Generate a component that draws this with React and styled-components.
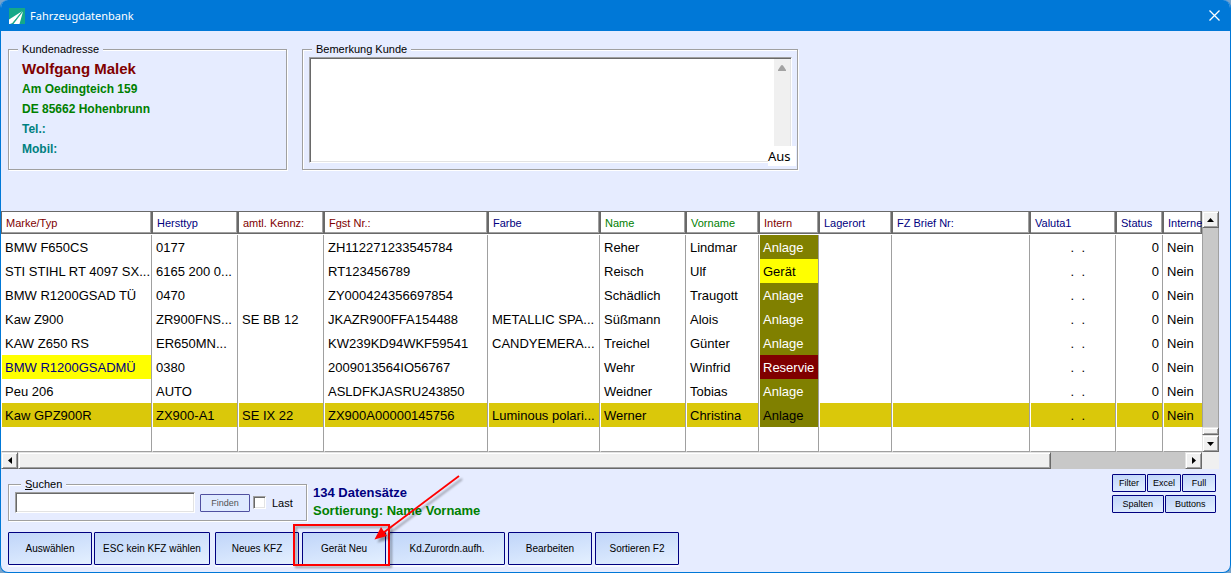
import React from "react";
import styled, { createGlobalStyle } from "styled-components";

const columns = [
  { title: "Marke/Typ", width: 151, color: "#800000" },
  { title: "Hersttyp", width: 86, color: "#000080" },
  { title: "amtl. Kennz:", width: 86, color: "#800000" },
  { title: "Fgst Nr.:", width: 164, color: "#800000" },
  { title: "Farbe", width: 112, color: "#000080" },
  { title: "Name", width: 86, color: "#008000" },
  { title: "Vorname", width: 73, color: "#008000" },
  { title: "Intern", width: 60, color: "#800000" },
  { title: "Lagerort", width: 73, color: "#000080" },
  { title: "FZ Brief Nr:", width: 138, color: "#000080" },
  { title: "Valuta1", width: 86, color: "#000080" },
  { title: "Status", width: 47, color: "#000080" },
  { title: "Interne", color: "#000080" },
];

const vehicles = [
  ["BMW F650CS", "0177", "", "ZH112271233545784", "", "Reher", "Lindmar", "Anlage"],
  ["STI STIHL RT 4097 SX...", "6165 200 0...", "", "RT123456789", "", "Reisch", "Ulf", "Gerät"],
  ["BMW R1200GSAD TÜ", "0470", "", "ZY000424356697854", "", "Schädlich", "Traugott", "Anlage"],
  ["Kaw Z900", "ZR900FNS...", "SE BB 12", "JKAZR900FFA154488", "METALLIC SPA...", "Süßmann", "Alois", "Anlage"],
  ["KAW Z650 RS", "ER650MN...", "", "KW239KD94WKF59541", "CANDYEMERA...", "Treichel", "Günter", "Anlage"],
  ["BMW R1200GSADMÜ", "0380", "", "2009013564IO56767", "", "Wehr", "Winfrid", "Reservie"],
  ["Peu 206", "AUTO", "", "ASLDFKJASRU243850", "", "Weidner", "Tobias", "Anlage"],
  ["Kaw GPZ900R", "ZX900-A1", "SE IX 22", "ZX900A00000145756", "Luminous polari...", "Werner", "Christina", "Anlage"],
];

const markedRow = 5;
const selectedRow = 7;

const internColors = {
  Anlage: { bg: "#808000", fg: "#ffffff" },
  Gerät: { bg: "#ffff00", fg: "#000000" },
  Reservie: { bg: "#800000", fg: "#ffffff" },
};

function cellColors(row, col, value) {
  if (col === 7) {
    const { bg, fg } = internColors[value];
    return { $bg: bg, $fg: row === selectedRow ? "#000000" : fg };
  }
  if (row === selectedRow) return { $bg: "#dac80a" };
  if (row === markedRow && col === 0) return { $bg: "#ffff00", $fg: "#000080" };
  return {};
}

function Arrow({ direction }) {
  const points = {
    up: "0,4 7,4 3.5,0",
    down: "0,0 7,0 3.5,4",
    left: "4,0 4,7 0,3.5",
    right: "0,0 0,7 4,3.5",
  };
  const upright = direction === "up" || direction === "down";
  return (
    <svg width={upright ? 7 : 4} height={upright ? 4 : 7} aria-hidden="true">
      <polygon points={points[direction]} fill="#000" />
    </svg>
  );
}

function VehicleTable() {
  return (
    <Grid>
      <TableArea>
        <Table>
          <colgroup>
            {columns.map((c) => (
              <Col key={c.title} $width={c.width} />
            ))}
          </colgroup>
          <thead>
            <tr>
              {columns.map((c) => (
                <HeadCell key={c.title} $color={c.color}>
                  {c.title}
                </HeadCell>
              ))}
            </tr>
          </thead>
          <tbody>
            {vehicles.map((vehicle, row) => (
              <tr key={vehicle[3]}>
                {[...vehicle, "", "", ".  .", "0", "Nein"].map((value, col) => (
                  <Cell
                    key={columns[col].title}
                    $align={col === 10 || col === 11 ? "right" : "left"}
                    $end={col === 10 ? 30 : 3}
                    {...cellColors(row, col, value)}
                  >
                    {value}
                  </Cell>
                ))}
              </tr>
            ))}
            <tr>
              {columns.map((c) => (
                <EmptyCell key={c.title} />
              ))}
            </tr>
          </tbody>
        </Table>
      </TableArea>
      <VerticalBar>
        <ScrollButton type="button" aria-label="Nach oben">
          <Arrow direction="up" />
        </ScrollButton>
        <VerticalTrack />
        <VerticalThumb />
        <ScrollButton type="button" aria-label="Nach unten">
          <Arrow direction="down" />
        </ScrollButton>
      </VerticalBar>
      <HorizontalBar>
        <ScrollButton type="button" aria-label="Nach links">
          <Arrow direction="left" />
        </ScrollButton>
        <HorizontalThumb />
        <Track />
        <ScrollButton type="button" aria-label="Nach rechts">
          <Arrow direction="right" />
        </ScrollButton>
      </HorizontalBar>
      <Corner />
    </Grid>
  );
}

export default function App() {
  return (
    <>
      <GlobalStyle />
      <Window>
        <TitleBar>
          <svg width="16" height="16" viewBox="0 0 16 16" aria-hidden="true">
            <rect width="16" height="16" fill="#14a888" />
            <path d="M0 11.5 L13.5 3 L3.5 15 L1 16 L0 16 Z" fill="#fff" />
            <path d="M14 3.5 L10.5 16 L4.5 16 Z" fill="#fff" />
            <path d="M13.5 3 L3.5 15.5" stroke="#14a888" strokeWidth="0.7" />
          </svg>
          <Title>Fahrzeugdatenbank</Title>
          <CloseButton type="button" aria-label="Schließen">
            <svg width="11" height="11" viewBox="0 0 11 11" aria-hidden="true">
              <path d="M0.5 0.5 L10.5 10.5 M10.5 0.5 L0.5 10.5" stroke="#fff" strokeWidth="1.3" />
            </svg>
          </CloseButton>
        </TitleBar>

        <Customer>
          <AddressGroup>
            <Legend>Kundenadresse</Legend>
            <CustomerName>Wolfgang Malek</CustomerName>
            <AddressLine $color="#008000">Am Oedingteich 159</AddressLine>
            <AddressLine $color="#008000">DE 85662 Hohenbrunn</AddressLine>
            <AddressLine $color="#008080">Tel.:</AddressLine>
            <AddressLine $color="#008080">Mobil:</AddressLine>
          </AddressGroup>
          <NoteGroup>
            <Legend>Bemerkung Kunde</Legend>
            <NoteBox>
              <Note aria-label="Bemerkung Kunde" />
              <NoteScroll>
                <svg width="8" height="6" viewBox="0 0 8 6" aria-hidden="true">
                  <path d="M0 6 L0 5 L3 0.5 Q4 -0.5 5 0.5 L8 5 L8 6 Z" fill="#a3a3a3" />
                </svg>
              </NoteScroll>
            </NoteBox>
            <NoteState>Aus</NoteState>
          </NoteGroup>
        </Customer>

        <VehicleTable />

        <Footer>
          <div>
            <SearchRow>
              <SearchGroup>
                <Legend>
                  <u>S</u>uchen
                </Legend>
                <SearchFields>
                  <SearchInput type="text" aria-label="Suchen" />
                  <FindButton type="button">Finden</FindButton>
                  <LastLabel>
                    <CheckBox type="checkbox" />
                    Last
                  </LastLabel>
                </SearchFields>
              </SearchGroup>
              <Summary>
                <SummaryLine $color="#000080">134 Datensätze</SummaryLine>
                <SummaryLine $color="#008000">Sortierung: Name Vorname</SummaryLine>
              </Summary>
            </SearchRow>
            <Actions>
              <ActionGroup $gap={2}>
                <ActionButton type="button">Auswählen</ActionButton>
                <ActionButton type="button" $wide>
                  ESC kein KFZ wählen
                </ActionButton>
              </ActionGroup>
              <ActionGroup $gap={3}>
                <ActionButton type="button">Neues KFZ</ActionButton>
                <Highlighted>
                  <ActionButton type="button">Gerät Neu</ActionButton>
                  <Frame />
                  <Pointer viewBox="0 0 100 80" aria-hidden="true">
                    <path d="M89 6 L13 63" stroke="#f00" strokeWidth="1.8" />
                    <polygon points="4.5,69.5 11,57 17,66" fill="#f00" />
                  </Pointer>
                </Highlighted>
                <ActionButton type="button" $wide>
                  Kd.Zurordn.aufh.
                </ActionButton>
                <ActionButton type="button">Bearbeiten</ActionButton>
                <ActionButton type="button">Sortieren F2</ActionButton>
              </ActionGroup>
            </Actions>
          </div>
          <Tools>
            <ToolRow>
              <ToolButton type="button">Filter</ToolButton>
              <ToolButton type="button">Excel</ToolButton>
              <ToolButton type="button">Full</ToolButton>
            </ToolRow>
            <ToolRow>
              <ToolButton type="button">Spalten</ToolButton>
              <ToolButton type="button">Buttons</ToolButton>
            </ToolRow>
          </Tools>
        </Footer>
      </Window>
    </>
  );
}

const GlobalStyle = createGlobalStyle`
  * {
    box-sizing: border-box;
  }
  body {
    margin: 0;
    background: #76a3cc;
    font-family: "Liberation Sans", Arial, sans-serif;
    font-size: 11px;
    color: #000;
  }
  button,
  input,
  textarea {
    font-family: inherit;
    margin: 0;
  }
`;

const Window = styled.main`
  min-height: 100vh;
  display: flex;
  flex-direction: column;
  background: #e6ecff;
  border: 1px solid #0078d7;
  border-top: 0;
  border-radius: 8px;
  overflow: hidden;
`;

const TitleBar = styled.header`
  display: flex;
  align-items: center;
  gap: 5px;
  height: 31px;
  padding: 0 10px 0 8px;
  background: #0078d7;
  color: #fff;
`;

const Title = styled.h1`
  flex: 1;
  margin: 0;
  font: 11px "Noto Sans", sans-serif;
`;

const CloseButton = styled.button`
  display: flex;
  padding: 0;
  border: 0;
  background: none;
`;

const Customer = styled.section`
  display: flex;
  gap: 15px;
  padding: 12px 7px 41px;
`;

const Group = styled.fieldset`
  position: relative;
  margin: 0;
  min-width: 0;
  border: 1px solid #a0a0a0;
  box-shadow: 1px 1px 0 #fff, inset 1px 1px 0 #fff;
`;

const Legend = styled.legend`
  padding: 0 4px;
  line-height: 13px;
  background: #e6ecff;
`;

const AddressGroup = styled(Group)`
  flex: 0 1 279px;
  padding: 3px 9px 10px;
`;

const NoteGroup = styled(Group)`
  flex: 0 1 496px;
  padding: 1px 5px 6px 6px;

  legend {
    margin-left: 3px;
  }
`;

const AddressLine = styled.p`
  margin: 0;
  padding-left: 4px;
  font-size: 12px;
  font-weight: bold;
  line-height: 20px;
  color: ${(p) => p.$color};
`;

const CustomerName = styled(AddressLine)`
  font-size: 15px;
  color: #800000;
`;

const NoteBox = styled.div`
  display: flex;
  height: 106px;
  border: 1px solid;
  border-color: #a0a0a0 #fff #fff #a0a0a0;
  box-shadow: inset 1px 1px 0 #696969, inset -1px -1px 0 #e3e3e3;
  padding: 1px;
  background: #fff;
`;

const Note = styled.textarea`
  flex: 1;
  min-width: 0;
  padding: 2px;
  border: 0;
  background: transparent;
  resize: none;
  font-size: 13px;
`;

const NoteScroll = styled.div`
  display: flex;
  justify-content: center;
  width: 16px;
  padding-top: 6px;
  background: #f0f0f0;
`;

const NoteState = styled.span`
  position: absolute;
  right: 1px;
  bottom: 3px;
  width: 28px;
  background: #fff;
  font: 13px/20px "Noto Sans", sans-serif;
`;

const Grid = styled.section`
  display: grid;
  grid-template-columns: minmax(0, 1fr) 17px;
  margin-right: 11px;
`;

const TableArea = styled.div`
  overflow: hidden;
  background: #fff;
`;

const Table = styled.table`
  width: 100%;
  table-layout: fixed;
  border-spacing: 0;
`;

const Col = styled.col`
  width: ${(p) => (p.$width ? `${p.$width}px` : "auto")};
`;

const HeadCell = styled.th`
  height: 24px;
  padding: 0 0 0 5px;
  overflow: hidden;
  white-space: nowrap;
  text-align: left;
  font-size: 11px;
  font-weight: normal;
  color: ${(p) => p.$color};
  box-shadow: inset 0 -1px 0 #fff, inset 0 1px 0 #696969,
    inset 1px -2px 0 #696969, inset -1px 0 0 #696969, inset -2px -3px 0 #a0a0a0;
`;

const Cell = styled.td`
  height: 24px;
  padding: 0 ${(p) => p.$end}px 0 3px;
  overflow: hidden;
  white-space: pre;
  text-align: ${(p) => p.$align};
  font-size: 13px;
  color: ${(p) => p.$fg || "#000"};
  background: ${(p) => p.$bg || "#fff"};
  border-left: 1px solid #fff;
  border-right: 1px solid #a0a0a0;

  &:last-child {
    border-right: 0;
  }
`;

const EmptyCell = styled.td`
  height: 25px;
  border-left: 1px solid #fff;
  border-right: 1px solid #a0a0a0;
  border-bottom: 1px solid #a0a0a0;

  &:last-child {
    border-right: 0;
  }
`;

const raised = `
  background: #f0f0f0;
  border: 1px solid;
  border-color: #e3e3e3 #696969 #696969 #e3e3e3;
  box-shadow: inset 1px 1px 0 #fff, inset -1px -1px 0 #a0a0a0;
`;

const ScrollButton = styled.button`
  display: flex;
  flex: none;
  align-items: center;
  justify-content: center;
  width: 17px;
  height: 17px;
  padding: 0;
  ${raised}
`;

const Track = styled.div`
  flex: 1;
  background: #c8c8c8;
`;

const VerticalTrack = styled(Track)`
  border: 1px solid #a0a0a0;
  border-width: 0 1px;
`;

const VerticalBar = styled.div`
  display: flex;
  flex-direction: column;
`;

const VerticalThumb = styled.div`
  height: 8px;
  ${raised}
`;

const HorizontalBar = styled.div`
  display: flex;
  height: 17px;
`;

const HorizontalThumb = styled.div`
  width: 86%;
  ${raised}
`;

const Corner = styled.div`
  background: #f0f0f0;
`;

const Footer = styled.footer`
  display: flex;
  justify-content: space-between;
  padding: 5px 14px 6px 7px;
`;

const SearchRow = styled.div`
  display: flex;
  gap: 6px;
  padding-top: 4px;
`;

const SearchGroup = styled(Group)`
  width: 299px;
  padding: 1px 6px 7px;

  legend {
    margin-left: 6px;
  }
`;

const SearchFields = styled.div`
  display: flex;
  align-items: center;
`;

const SearchInput = styled.input`
  width: 180px;
  height: 21px;
  padding: 0 3px;
  border: 1px solid;
  border-color: #a0a0a0 #fff #fff #a0a0a0;
  box-shadow: inset 1px 1px 0 #696969, inset -1px -1px 0 #e3e3e3;
  background: #fff;
`;

const Button = styled.button`
  padding: 0;
  border: 1px solid #000080;
  border-radius: 1px;
  background: linear-gradient(170deg, #c0d5f9, #e4f0ff);
  color: #000;
`;

const FindButton = styled(Button)`
  width: 50px;
  height: 18px;
  margin: 0 3px 0 5px;
  border-color: #5050a0;
  background: #dfeaff;
  color: #555;
  font-size: 9px;
`;

const LastLabel = styled.label`
  display: flex;
  align-items: center;
  gap: 6px;
`;

const CheckBox = styled.input`
  appearance: none;
  width: 13px;
  height: 13px;
  border: 1px solid;
  border-color: #a0a0a0 #fff #fff #a0a0a0;
  box-shadow: inset 1px 1px 0 #696969, inset -1px -1px 0 #e3e3e3;
  background: #fff;
`;

const Summary = styled.div`
  padding-top: 6px;
`;

const SummaryLine = styled.p`
  margin: 0;
  font-size: 13px;
  font-weight: bold;
  line-height: 18px;
  color: ${(p) => p.$color};
`;

const Actions = styled.div`
  display: flex;
  gap: 5px;
  padding-top: 11px;
`;

const ActionGroup = styled.div`
  display: flex;
  gap: ${(p) => p.$gap}px;
`;

const ActionButton = styled(Button)`
  width: ${(p) => (p.$wide ? 116 : 84)}px;
  height: 33px;
  box-shadow: 0 2px 0 #f8faff;
  font-size: 10px;
`;

const Highlighted = styled.div`
  position: relative;
`;

const Frame = styled.span`
  position: absolute;
  inset: -8px -4px -1px -9px;
  border: 2px solid #f00;
  filter: drop-shadow(2px 2px 1px rgba(0, 0, 0, 0.35));
  pointer-events: none;
`;

const Pointer = styled.svg`
  position: absolute;
  left: 68px;
  top: -62px;
  width: 100px;
  height: 80px;
  z-index: 1;
  filter: drop-shadow(3px 3px 1px rgba(0, 0, 0, 0.35));
  pointer-events: none;
`;

const Tools = styled.div`
  display: flex;
  flex-direction: column;
  gap: 3px;
  width: 104px;
`;

const ToolRow = styled.div`
  display: flex;
  gap: 1px;
`;

const ToolButton = styled(Button)`
  flex: 1;
  height: 18px;
  font-size: 9px;
`;
